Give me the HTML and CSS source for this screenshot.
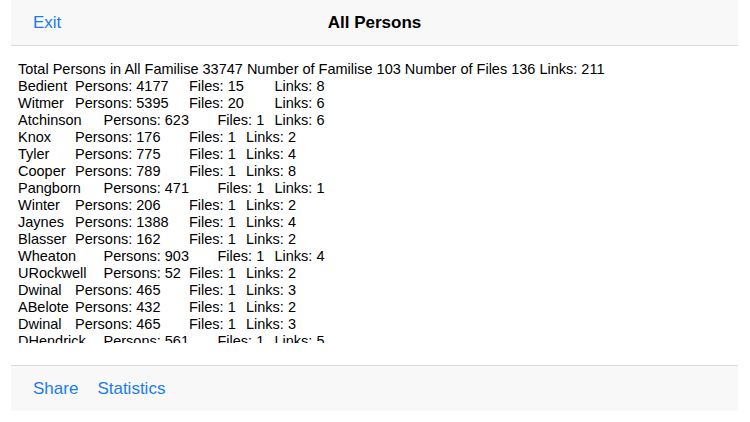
FILE: index.html
```html
<!DOCTYPE html>
<html lang="en">
<head>
    <meta charset="UTF-8">
    <meta name="viewport" content="width=device-width, initial-scale=1.0">
    <title>All Persons</title>
    <link rel="stylesheet" href="styles.css">
</head>
<body>
    <div class="screen">
        <header class="topbar">
            <a class="barbtn" href="#">Exit</a>
            <h1>All Persons</h1>
        </header>

        <main class="content">
<pre class="report">Total Persons in All Familise 33747 Number of Familise 103 Number of Files 136 Links: 211
Bedient	Persons: 4177	Files: 15		Links: 8
Witmer	Persons: 5395	Files: 20		Links: 6
Atchinson	Persons: 623	Files: 1	Links: 6
Knox	Persons: 176	Files: 1	Links: 2
Tyler	Persons: 775	Files: 1	Links: 4
Cooper	Persons: 789	Files: 1	Links: 8
Pangborn	Persons: 471	Files: 1	Links: 1
Winter	Persons: 206	Files: 1	Links: 2
Jaynes	Persons: 1388	Files: 1	Links: 4
Blasser	Persons: 162	Files: 1	Links: 2
Wheaton	Persons: 903	Files: 1	Links: 4
URockwell	Persons: 52	Files: 1	Links: 2
Dwinal	Persons: 465	Files: 1	Links: 3
ABelote	Persons: 432	Files: 1	Links: 2
Dwinal	Persons: 465	Files: 1	Links: 3
DHendrick	Persons: 561	Files: 1	Links: 5
Sherman	Persons: 318	Files: 1	Links: 2</pre>
        </main>

        <footer class="bottombar">
            <a class="barbtn" href="#">Share</a>
            <a class="barbtn" href="#">Statistics</a>
        </footer>
    </div>
</body>
</html>
```

FILE: styles.css
```css
body { margin: 0; background: #fff; font-family: "Liberation Sans", Arial, sans-serif; }
.screen { margin: 0 12px 0 11px; height: 411px; display: flex; flex-direction: column; }

.topbar { position: relative; height: 45px; flex: none; background: #f8f8f8; border-bottom: 1px solid #dadada; display: flex; align-items: center; padding-left: 22px; }
.topbar h1 { position: absolute; left: 0; right: 0; top: 0; margin: 0; line-height: 45px; text-align: center; font-size: 17px; font-weight: bold; color: #000; pointer-events: none; }

.barbtn { color: #1b7cf0; text-decoration: none; font-size: 17px; }

.content { flex: 1; padding: 15px 0 0 7px; }
.report { margin: 0; height: 282px; overflow: hidden; font-family: "Liberation Sans", Arial, sans-serif; font-size: 14.5px; line-height: 17px; color: #000; white-space: pre; tab-size: 28.5px; -moz-tab-size: 28.5px; }

.bottombar { height: 45px; flex: none; background: #f8f8f8; border-top: 1px solid #dadada; display: flex; align-items: center; gap: 19px; padding-left: 22px; }
```
